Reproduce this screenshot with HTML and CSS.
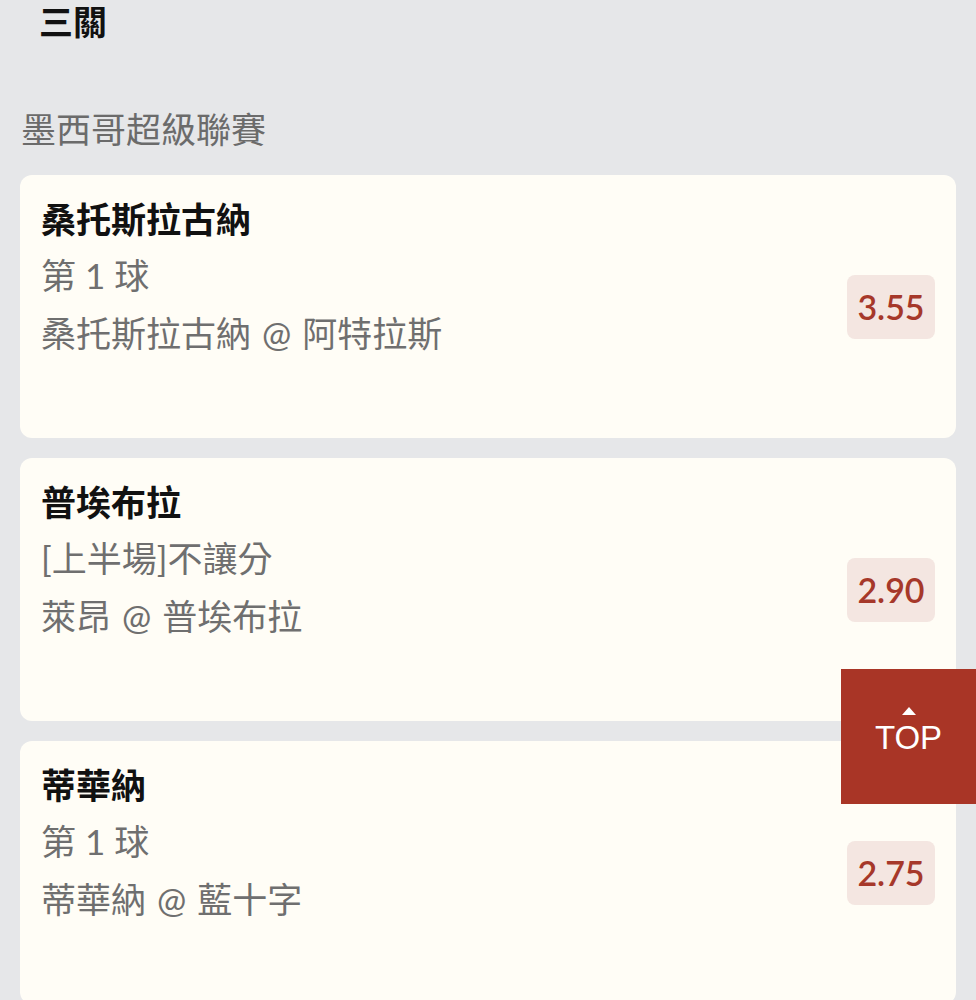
FILE: index.html
```html
<!DOCTYPE html>
<html lang="zh-Hant">
<head>
    <meta charset="UTF-8">
    <meta name="viewport" content="width=device-width, initial-scale=1.0">
    <title>三關</title>
    <link rel="stylesheet" href="styles.css">
</head>
<body>

<h1 class="page-title">三關</h1>

<h2 class="league">墨西哥超級聯賽</h2>

<div class="bets">
  <div class="bet-card">
    <div class="bet-info">
      <div class="bet-team">桑托斯拉古納</div>
      <div class="bet-line">第 1 球</div>
      <div class="bet-line">桑托斯拉古納 <span class="at">@</span> 阿特拉斯</div>
    </div>
    <div class="odds">3.55</div>
  </div>

  <div class="bet-card">
    <div class="bet-info">
      <div class="bet-team">普埃布拉</div>
      <div class="bet-line">[上半場]不讓分</div>
      <div class="bet-line">萊昂 <span class="at">@</span> 普埃布拉</div>
    </div>
    <div class="odds">2.90</div>
  </div>

  <div class="bet-card">
    <div class="bet-info">
      <div class="bet-team">蒂華納</div>
      <div class="bet-line">第 1 球</div>
      <div class="bet-line">蒂華納 <span class="at">@</span> 藍十字</div>
    </div>
    <div class="odds">2.75</div>
  </div>
</div>

<a class="to-top" href="#">
  <span class="to-top-arrow"></span>
  TOP
</a>

</body>
</html>
```

FILE: styles.css
```css
body {
    margin: 0;
    background-color: #e6e7e9;
    font-family: Lato, "Noto Sans CJK TC", sans-serif;
    overflow: hidden;
}
.page-title {
    margin: 0;
    padding-left: 39px;
    font-size: 34px;
    font-weight: 700;
    line-height: 44px;
    color: #111;
}
.league {
    margin: 63px 0 24px;
    padding-left: 21px;
    font-size: 35px;
    font-weight: 400;
    line-height: 44px;
    color: #6b6b6b;
}
.bets {
    display: flex;
    flex-direction: column;
    gap: 20px;
    padding: 0 20px;
}
.bet-card {
    display: flex;
    align-items: center;
    justify-content: space-between;
    height: 263px;
    box-sizing: border-box;
    padding: 0 21px 0 21px;
    background: #fffdf6;
    border-radius: 12px;
}
.bet-info {
    align-self: flex-start;
    padding-top: 17px;
}
.bet-team {
    font-size: 35px;
    font-weight: 700;
    line-height: 54px;
    color: #111;
}
.bet-line {
    font-size: 35px;
    line-height: 58px;
    color: #6f6f6f;
}
.at {
    margin: 0 2px;
}
.odds {
    width: 88px;
    height: 64px;
    line-height: 64px;
    text-align: center;
    background: #f4e6e1;
    border-radius: 8px;
    color: #a6382a;
    font-size: 34px;
    font-weight: 600;
}
.to-top {
    position: fixed;
    top: 669px;
    right: 0;
    width: 135px;
    height: 135px;
    box-sizing: border-box;
    padding-top: 38px;
    background: #a93526;
    color: #fff;
    text-decoration: none;
    text-align: center;
    font-family: "Liberation Sans", Arial, sans-serif;
    font-size: 33px;
    line-height: 42px;
}
.to-top-arrow {
    display: block;
    width: 0;
    height: 0;
    margin: 0 auto 2px;
    border-left: 7px solid transparent;
    border-right: 7px solid transparent;
    border-bottom: 8px solid #fff;
}
```
